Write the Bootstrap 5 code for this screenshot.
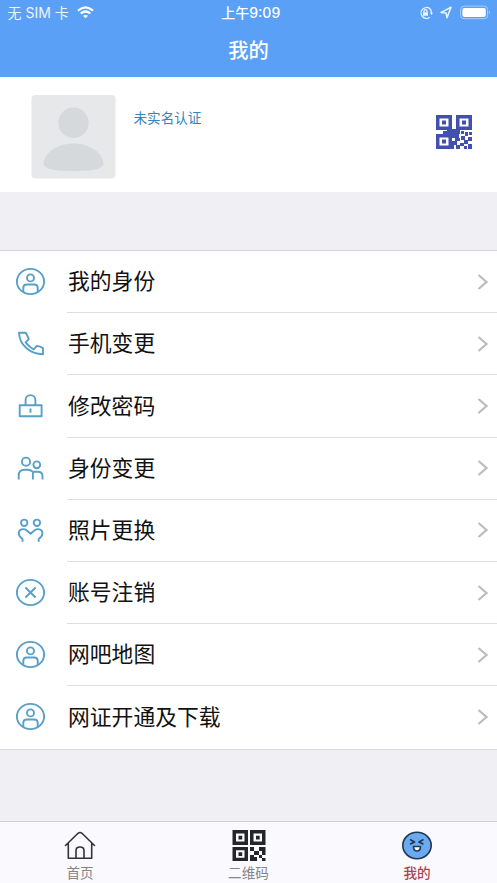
<!DOCTYPE html>
<html lang="zh-CN">
<head>
<meta charset="utf-8">
<meta name="viewport" content="width=device-width, initial-scale=1">
<title>我的</title>
<link href="https://cdn.jsdelivr.net/npm/bootstrap@5.3.0/dist/css/bootstrap.min.css" rel="stylesheet">
<style>
body{font-family:"Liberation Sans","Noto Sans CJK SC",sans-serif;background:#efeff4;height:883px;overflow:hidden}
svg{display:block;flex:none}
.app-top{background:#5aa0f6;height:77px;color:#fff}
.status{height:25px;padding:0 5px 0 7.5px;font-size:14px;line-height:25px}
.status>div{flex:1 1 0}
.status .clock{font-family:Inter,"Noto Sans CJK SC",sans-serif;font-weight:500;font-size:14px;padding-left:2px}
.carrier{font-family:Inter,"Noto Sans CJK SC",sans-serif;font-size:14px;color:#e9f7ff}
.status-icons{gap:7.5px}
.page-title{font-size:20.3px;line-height:52px;font-weight:500}
.profile{height:115px;padding:17px 24px 14px 31px}
.avatar{margin-top:.5px}
.verify{font-size:13.6px;line-height:20px;color:#3585bd;margin:15px 0 0 17.5px}
.qr-blue{margin-top:20px}
.menu{margin-top:58px;border-top:1px solid #d3d3e0;border-bottom:1px solid #d6d6de}
.menu-item{height:62.2px;padding-left:15px;color:#111}
.menu-item svg.ic{stroke:#589fc9;stroke-width:1.9;fill:none;stroke-linejoin:round;margin-bottom:1px}
.menu-label{margin-left:20.5px;padding:2px 8px 0 1.5px;font-size:21.8px;border-bottom:1.5px solid #dddde0}
.menu-label svg{margin-bottom:2px}
.menu-item:last-child .menu-label{border-bottom-color:transparent}
.tabs{height:62px;background:#fafafe;border-top:1.5px solid #d0d0d8;font-size:13.6px;color:#858589}
.tab{width:168.5px;padding-top:8px;flex:none}
.tab span{line-height:18px;margin-top:3px}
.tab.on{color:#ad454c;font-weight:500}
</style>
<script src="https://cdn.jsdelivr.net/npm/bootstrap@5.3.0/dist/js/bootstrap.bundle.min.js"></script>
</head>
<body class="d-flex flex-column">
<svg width="0" height="0" class="position-absolute">
<defs>
<symbol id="person" viewBox="0 0 31 31"><ellipse cx="15.5" cy="15.5" rx="13.6" ry="12.6"/><circle cx="15.5" cy="11.9" r="3.5"/><path d="M8.3 26v-4.200q0-3.300 3.500-3.300h7.400q3.500 0 3.500 3.300V26"/></symbol>
<symbol id="chev" viewBox="0 0 12 18"><path d="M1.500 2 9.500 9 1.500 16" fill="none" stroke="#bdbdc0" stroke-width="2.300"/></symbol>
</defs>
</svg>
<header class="app-top">
<div class="status d-flex align-items-center">
<div class="d-flex align-items-center carrier"><span>无 SIM 卡</span>
<svg class="ms-2" width="17" height="13" viewBox="0 0 17 13" fill="none" stroke="#fff" stroke-width="2.200"><path d="M1 4.600Q8.500-1.800 16 4.600M3.700 7.500Q8.500 3.500 13.300 7.500"/><path d="M6 9.800Q8.500 8 11 9.800L8.500 12.300Z" fill="#fff" stroke="none"/></svg></div>
<div class="text-center clock">上午9:09</div>
<div class="d-flex align-items-center justify-content-end status-icons">
<svg width="14" height="14" viewBox="0 0 14 14" fill="none" stroke="#eaf6ff" stroke-width="1.300"><path d="M11 2.800A5.400 5.400 0 1 0 10.800 11.200M11 2.800A5.400 5.400 0 0 1 12.400 7"/><path d="M5 6.500V5.200a1.500 1.500 0 0 1 3 0v1.300"/><path d="M4 6.200h5v3.600H4zM11 6.800h3L12.500 9z" fill="#eaf6ff" stroke="none"/></svg>
<svg width="12" height="13" viewBox="0 0 12 13" fill="none" stroke="#eaf6ff" stroke-width="1.500" stroke-linejoin="round"><path d="M1 6.600 11 1.200 7 11.800 6 6.900Z"/></svg>
<svg width="32" height="15" viewBox="0 0 32 15"><rect x=".6" y="1.100" width="27" height="12.600" rx="3.400" fill="none" stroke="#a9cdfa"/><rect x="2.400" y="2.900" width="23.400" height="9" rx="1.800" fill="#fff"/><path d="M29 5.300q2 2 0 4z" fill="#a9cdfa"/></svg>
</div>
</div>
<div class="page-title text-center">我的</div>
</header>
<section class="profile bg-white d-flex">
<svg class="avatar" width="85" height="84" viewBox="0 0 85 84"><rect x=".5" width="84" height="83.500" rx="4" fill="#e7e8ea"/><circle cx="42.500" cy="27.800" r="15.200" fill="#d6d9dc"/><path d="M12.500 68C14 56 29 48.500 42.500 48.500S71 56 72.500 68C73 73 66 76 42.500 76S12 73 12.500 68Z" fill="#d6d9dc"/></svg>
<div class="verify">未实名认证</div>
<svg class="qr-blue ms-auto" width="38" height="36" viewBox="0 0 38 36" fill="#4151ad"><path fill-rule="evenodd" d="M1 1h16v15H1zM4.500 4.500v8h9v-8zM21 1h16v15H21zM24.500 4.500v8h9v-8zM1 20h16v15H1zM4.500 23.500v8h9v-8z"/><path d="M7 6.500h4v4H7zM27 6.500h4v4h-4zM7 25.500h4v4H7zM8 17h4v3H8zM12 15h9v5h-9zM17 20h7v4h-7zM21 16h4v4h-4zM17 27h5v4h-5zM20 24h5v3h-5zM21 31h4v4h-4zM15 31h4v4h-4zM26 17h3v3h-3zM30 18h3v4h-3zM34 18h3v3h-3zM26 22h4v4h-4zM33 23h4v4h-4zM29 26h4v4h-4zM25 29h4v3h-4zM33 30h4v5h-4zM29 32h3v3h-3z"/></svg>
</section>
<main class="menu bg-white">
<div class="menu-item d-flex align-items-center"><svg class="ic" width="31" height="31"><use href="#person"/></svg><div class="menu-label d-flex align-items-center justify-content-between flex-fill h-100">我的身份<svg width="12" height="18"><use href="#chev"/></svg></div></div>
<div class="menu-item d-flex align-items-center"><svg class="ic" width="31" height="31" viewBox="0 0 31 31"><path d="M4 4.700h6.800q1.700 3 3 6.500L10.600 14.400Q14.300 19 18.800 21.500L21.700 17.900Q25.500 18.200 28 20.200V26.200C15 26 4.500 17 4 4.700Z"/></svg><div class="menu-label d-flex align-items-center justify-content-between flex-fill h-100">手机变更<svg width="12" height="18"><use href="#chev"/></svg></div></div>
<div class="menu-item d-flex align-items-center"><svg class="ic" width="31" height="31" viewBox="0 0 31 31"><path d="M4.700 15.300h21.900v11H4.700zM10.600 15v-5a4.900 4.900 0 0 1 9.800 0v5M15.500 18.500v4.300"/></svg><div class="menu-label d-flex align-items-center justify-content-between flex-fill h-100">修改密码<svg width="12" height="18"><use href="#chev"/></svg></div></div>
<div class="menu-item d-flex align-items-center"><svg class="ic" width="31" height="31" viewBox="0 0 31 31"><circle cx="11" cy="8.700" r="4.100"/><circle cx="21.800" cy="11.800" r="3.400"/><path d="M3.700 26.500V22.500Q3.700 16.800 9.500 16.800H12.500Q15.800 16.800 17.600 18.600M17.900 26.500V18.800H22.500Q27.500 18.800 27.500 23V26.500"/></svg><div class="menu-label d-flex align-items-center justify-content-between flex-fill h-100">身份变更<svg width="12" height="18"><use href="#chev"/></svg></div></div>
<div class="menu-item d-flex align-items-center"><svg class="ic" width="31" height="31" viewBox="0 0 31 31"><circle cx="9.200" cy="7.800" r="3.200"/><circle cx="21.900" cy="7.800" r="3.200"/><path d="M7.500 26.700V24Q3.800 21.500 3.800 18C3.800 14.300 8.500 13 11.500 15.300L15.600 18.800 19.700 15.300C22.700 13 27.400 14.300 27.400 18Q27.400 21.500 23.700 24V26.700"/></svg><div class="menu-label d-flex align-items-center justify-content-between flex-fill h-100">照片更换<svg width="12" height="18"><use href="#chev"/></svg></div></div>
<div class="menu-item d-flex align-items-center"><svg class="ic" width="31" height="31" viewBox="0 0 31 31"><ellipse cx="15.500" cy="15.500" rx="13.600" ry="12.600"/><path d="M10.400 10.500l10.200 10M20.600 10.500l-10.200 10"/></svg><div class="menu-label d-flex align-items-center justify-content-between flex-fill h-100">账号注销<svg width="12" height="18"><use href="#chev"/></svg></div></div>
<div class="menu-item d-flex align-items-center"><svg class="ic" width="31" height="31"><use href="#person"/></svg><div class="menu-label d-flex align-items-center justify-content-between flex-fill h-100">网吧地图<svg width="12" height="18"><use href="#chev"/></svg></div></div>
<div class="menu-item d-flex align-items-center"><svg class="ic" width="31" height="31"><use href="#person"/></svg><div class="menu-label d-flex align-items-center justify-content-between flex-fill h-100">网证开通及下载<svg width="12" height="18"><use href="#chev"/></svg></div></div>
</main>
<nav class="tabs mt-auto d-flex justify-content-center">
<div class="tab d-flex flex-column align-items-center"><svg width="32" height="32" viewBox="0 0 32 32" fill="none" stroke="#333338" stroke-width="1.600" stroke-linejoin="round" stroke-linecap="round"><path d="M1.500 15.500 14 3.300Q16 1.700 18 3.300L30.500 15.500M4.300 13.500V28.300H27.700V13.500M12 28V20.500q0-3.500 4-3.500t4 3.500V28"/></svg><span>首页</span></div>
<div class="tab d-flex flex-column align-items-center"><svg width="34" height="32" viewBox="0 0 34 32" fill="#25262b"><path fill-rule="evenodd" d="M.5 0h15.500v15H.5zM4 3.500v8h8.500v-8zM18 0h15.500v15H18zM21.500 3.500v8H30v-8zM.5 17h15.500v14H.5zM4 20.300v7.500h8.500v-7.500z"/><path d="M6.500 5.700h3.700v3.700H6.500zM24 5.700h3.700v3.700H24zM6.500 22.200h3.700v3.700H6.500zM18 17h4v4h-4zM22 21h5v4h-5zM27 17h3v4h-3zM30 17h3.500v8H30zM18 25h4v2h3v4h-7zM27 25h3v3h-3zM30 28h3.500v3H30z"/></svg><span>二维码</span></div>
<div class="tab on d-flex flex-column align-items-center"><svg width="32" height="32" viewBox="0 0 32 32" fill="none" stroke="#24364f" stroke-width="1.600" stroke-linecap="round" stroke-linejoin="round"><ellipse cx="16" cy="15.500" rx="14.200" ry="13.200" fill="#69aaf1"/><path d="M9.500 9.800 13.500 12l-4 2M22 9.800 18 12l4 2"/><path d="M12.500 16.500H19.500Q19.500 21 16 21T12.500 16.500Z" fill="#fff"/></svg><span>我的</span></div>
</nav>
</body>
</html>
